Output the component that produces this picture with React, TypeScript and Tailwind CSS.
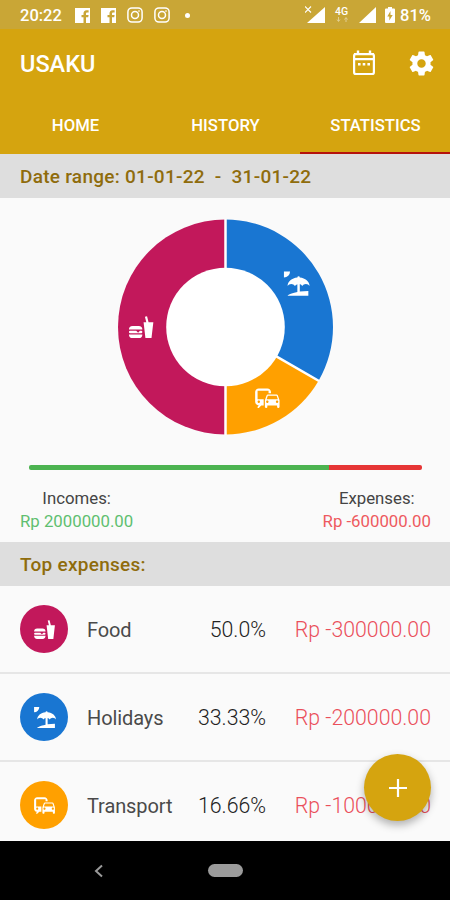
import type { ReactNode } from 'react';

const ICON_PATHS = {
  food: 'M15.5,21L14,8H16.23L15.1,3.46L16.84,3L18.09,8H22L20.5,21H15.5M5,11H10A3,3 0 0,1 13,14H2A3,3 0 0,1 5,11M13,18A3,3 0 0,1 10,21H5A3,3 0 0,1 2,18H13M3,15H8L9.5,16.5L11,15H12A1,1 0 0,1 13,16A1,1 0 0,1 12,17H3A1,1 0 0,1 2,16A1,1 0 0,1 3,15Z',
  beach:
    'M15,18.54C17.13,18.21 19.5,18 22,18V22H5C5,21.35 8.2,19.86 13,18.9V12.4C12.16,12.65 11.45,13.21 11,13.95C10.39,12.93 9.27,12.25 8,12.25C6.73,12.25 5.61,12.93 5,13.95C5.03,10.37 8.5,7.43 13,7.04V7A1,1 0 0,1 14,6A1,1 0 0,1 15,7V7.04C19.5,7.43 22.96,10.37 23,13.95C22.39,12.93 21.27,12.25 20,12.25C18.73,12.25 17.61,12.93 17,13.95C16.55,13.21 15.84,12.65 15,12.39V18.54M7,2A5,5 0 0,1 2,7V2H7Z',
  commute:
    'M12 4H5C3.34 4 2 5.34 2 7v8c0 1.66 1.34 3 3 3l-1 1v1h1l2-2.03L9 18v-5H4V5.98L13 6v2h2V7c0-1.66-1.34-3-3-3zM5 14c.55 0 1 .45 1 1s-.45 1-1 1-1-.45-1-1 .45-1 1-1zm15.57-4.34c-.14-.4-.52-.66-.97-.66h-7.19c-.46 0-.83.26-.98.66L10 13.77l.01 5.51c0 .38.31.72.69.72h.62c.38 0 .68-.38.68-.76V18h8v1.24c0 .38.31.76.69.76h.61c.38 0 .69-.34.69-.72l.01-1.37v-4.14l-1.43-4.11zm-8.16.34h7.19l1.03 3h-9.25l1.03-3zM12 16c-.55 0-1-.45-1-1s.45-1 1-1 1 .45 1 1-.45 1-1 1zm8 0c-.55 0-1-.45-1-1s.45-1 1-1 1 .45 1 1-.45 1-1 1z',
};

type IconName = keyof typeof ICON_PATHS;

interface Expense {
  name: string;
  percent: string;
  amount: string;
  icon: IconName;
  color: string;
}

const expenses: Expense[] = [
  { name: 'Food', percent: '50.0%', amount: 'Rp -300000.00', icon: 'food', color: 'bg-[#c2185b]' },
  { name: 'Holidays', percent: '33.33%', amount: 'Rp -200000.00', icon: 'beach', color: 'bg-[#1976d2]' },
  { name: 'Transport', percent: '16.66%', amount: 'Rp -100000.00', icon: 'commute', color: 'bg-[#ffa000]' },
];

const tabs = ['HOME', 'HISTORY', 'STATISTICS'];

function FacebookIcon() {
  return (
    <svg className="w-[15px] h-[15px]" viewBox="0 0 15 15">
      <path
        fill="currentColor"
        d="M0 0h15v15h-4V9.3h2.2l.4-2.3H11V5.6c0-.8.4-1.2 1.3-1.2h1.3V2.3h-2C9.5 2.3 8.5 3.6 8.5 5.5V7H6.5v2.3h2V15H0z"
      />
    </svg>
  );
}

function InstagramIcon() {
  return (
    <svg className="w-4 h-4" viewBox="0 0 16 16" fill="none" stroke="currentColor" strokeWidth="1.5">
      <rect x="0.9" y="0.9" width="14.2" height="14.2" rx="4" />
      <circle cx="8" cy="8" r="3.5" />
      <circle cx="12" cy="4" r="0.5" fill="currentColor" strokeWidth="0.6" />
    </svg>
  );
}

function SignalIcon() {
  return (
    <svg className="w-[17px] h-4" viewBox="0 0 17 16">
      <path d="M17 0v16H0z" fill="currentColor" />
    </svg>
  );
}

function StatusBar() {
  return (
    <div className="flex h-[29px] items-center bg-[#c9a636] pt-[1px] pl-5 text-white">
      <span className="w-[55px] pt-[2px] text-[16.5px] leading-none font-medium">20:22</span>
      <div className="flex items-center gap-[11px]">
        <FacebookIcon />
        <FacebookIcon />
        <InstagramIcon />
        <InstagramIcon />
      </div>
      <div className="ml-[15px] h-[5px] w-[5px] rounded-full bg-white" />
      <div className="ml-[115px] flex items-center">
        <svg className="h-[18px] w-5" viewBox="0 0 20 18">
          <path d="M20 1v16H2z" fill="currentColor" />
          <path d="M0 .5l6 6M6 .5l-6 6" stroke="currentColor" strokeWidth="1.1" />
        </svg>
        <div className="ml-[9px] flex h-[17px] w-[15px] flex-col items-center">
          <span className="text-[10.5px] leading-[10px] font-medium">4G</span>
          <svg className="h-[5px] w-3 opacity-45" viewBox="0 0 12 5" stroke="currentColor" fill="none">
            <path d="M2.5 0v4M1 2.5l1.5 2L4 2.5M10 5V1M8.5 2.5L10 .5l1.5 2" />
          </svg>
        </div>
        <div className="ml-[10px]">
          <SignalIcon />
        </div>
        <svg className="ml-[9px] h-4 w-[10px]" viewBox="0 0 10 16">
          <path
            fill="currentColor"
            fillRule="evenodd"
            d="M3 0h4v1.5h2a1 1 0 0 1 1 1V15a1 1 0 0 1-1 1H1a1 1 0 0 1-1-1V2.5a1 1 0 0 1 1-1h2zM5.5 4L2.3 9.5h2V13.5L7.7 8H5.5z"
          />
        </svg>
        <span className="ml-[5px] pt-[2px] text-[16.5px] leading-none font-medium">81%</span>
      </div>
    </div>
  );
}

function AppBar() {
  return (
    <header className="bg-[#d5a40f] text-white">
      <div className="flex h-[68px] items-center pl-5 pr-[14px]">
        <h1 className="flex-1 pt-[3px] text-[23.5px] leading-none font-medium">USAKU</h1>
        <svg className="h-[26px] w-[22px]" viewBox="0 0 22 26" fill="none" stroke="currentColor">
          <rect x="1.1" y="4" width="19.8" height="20" rx="1.8" strokeWidth="2.2" />
          <path d="M1 4.2h20M1 9.2h20" strokeWidth="2.2" />
          <path d="M5 4V.5M17 4V.5" strokeWidth="2.4" />
          <path d="M5 14.2h2.6M9.7 14.2h2.6M14.4 14.2H17" strokeWidth="2.6" />
        </svg>
        <svg className="ml-8 h-[29px] w-[29px]" viewBox="0 0 24 24" fill="currentColor">
          <path d="M19.43 12.98c.04-.32.07-.64.07-.98s-.03-.66-.07-.98l2.11-1.65c.19-.15.24-.42.12-.64l-2-3.46c-.12-.22-.39-.3-.61-.22l-2.49 1c-.52-.4-1.08-.73-1.69-.98l-.38-2.65C14.46 2.18 14.25 2 14 2h-4c-.25 0-.46.18-.49.42l-.38 2.65c-.61.25-1.17.59-1.69.98l-2.49-1c-.23-.09-.49 0-.61.22l-2 3.46c-.13.22-.07.49.12.64l2.11 1.65c-.04.32-.07.65-.07.98s.03.66.07.98l-2.11 1.65c-.19.15-.24.42-.12.64l2 3.46c.12.22.39.3.61.22l2.49-1c.52.4 1.08.73 1.69.98l.38 2.65c.03.24.24.42.49.42h4c.25 0 .46-.18.49-.42l.38-2.65c.61-.25 1.17-.59 1.69-.98l2.49 1c.23.09.49 0 .61-.22l2-3.46c.12-.22.07-.49-.12-.64l-2.11-1.65zM12 15.5c-1.93 0-3.5-1.57-3.5-3.5s1.57-3.5 3.5-3.5 3.5 1.57 3.5 3.5-1.57 3.5-3.5 3.5z" />
        </svg>
      </div>
      <nav className="grid h-[57px] grid-cols-3">
        {tabs.map((tab) => (
          <div
            key={tab}
            className={`flex items-center justify-center border-b-[2px] pt-[3px] pl-px text-[16.7px] leading-none font-medium ${
              tab === 'STATISTICS' ? 'border-[#b5120b]' : 'border-transparent'
            }`}
          >
            {tab}
          </div>
        ))}
      </nav>
    </header>
  );
}

function SectionTitle({ children }: { children: ReactNode }) {
  return (
    <div className="flex h-[44px] shrink-0 items-center bg-[#dedede] pl-5 text-[19px] leading-none font-medium tracking-[0.27px] whitespace-pre text-[#8f6c0c]">
      {children}
    </div>
  );
}

function DonutChart() {
  return (
    <svg className="mx-auto block h-[220px] w-[220px]" viewBox="-110.5 -110 220 220">
      <path d="M0 107.5A107.5 107.5 0 0 1 0-107.5V0z" fill="#c2185b" />
      <path d="M0-107.5A107.5 107.5 0 0 1 93.1 53.75L0 0z" fill="#1976d2" />
      <path d="M93.1 53.75A107.5 107.5 0 0 1 0 107.5V0z" fill="#ffa000" />
      <path d="M0-108V108M0 0L93.5 54" stroke="#fff" strokeWidth="2.5" />
      <circle r="59.3" fill="#fff" />
      <g fill="#fff">
        <path d={ICON_PATHS.food} transform="translate(-99 -14.5) scale(1.22)" />
        <path d={ICON_PATHS.beach} transform="translate(56 -58) scale(1.22)" />
        <path d={ICON_PATHS.commute} transform="translate(27.2 56.5) scale(1.22)" />
      </g>
    </svg>
  );
}

function Totals() {
  return (
    <div className="flex justify-between pr-[19px] pl-5 text-center text-[16.8px] leading-[23px] text-[#444]">
      <div>
        <p>Incomes:</p>
        <p className="text-[#5fbf70]">Rp 2000000.00</p>
      </div>
      <div>
        <p>Expenses:</p>
        <p className="text-[#ee5a5f]">Rp -600000.00</p>
      </div>
    </div>
  );
}

function ExpenseRow({ expense }: { expense: Expense }) {
  return (
    <div className="flex h-[88px] shrink-0 items-center border-b-2 border-[#e6e6e6] pr-[19px] pl-5 text-[21.3px] leading-none font-light text-[#222]">
      <div className={`flex h-12 w-12 items-center justify-center rounded-full ${expense.color}`}>
        <svg className="h-[25px] w-[25px]" viewBox="0 0 24 24" fill="#fff">
          <path d={ICON_PATHS[expense.icon]} />
        </svg>
      </div>
      <span className="ml-[19px] flex-1 pt-[2px] text-[20px] font-normal tracking-[-0.1px] text-[#4a4a4a]">
        {expense.name}
      </span>
      <span className="pt-[2px]">{expense.percent}</span>
      <span className="w-[165px] pt-[2px] text-right text-[#ea4f5a]">{expense.amount}</span>
    </div>
  );
}

export default function App() {
  return (
    <div className="relative flex h-[900px] w-[450px] flex-col overflow-hidden bg-[#fafafa] font-[Roboto,sans-serif]">
      <StatusBar />
      <AppBar />
      <SectionTitle>{'Date range: 01-01-22  -  31-01-22'}</SectionTitle>

      <div className="h-[344px] shrink-0 pt-[19px]">
        <DonutChart />
        <div className="mr-7 ml-[29px] mt-[28px] flex h-[5px] overflow-hidden rounded-[2px]">
          <div className="w-[300px] bg-[#4cb350]" />
          <div className="flex-1 bg-[#e63535]" />
        </div>
        <div className="mt-[17px]">
          <Totals />
        </div>
      </div>

      <SectionTitle>Top expenses:</SectionTitle>
      <div className="flex h-[255px] shrink-0 flex-col overflow-hidden">
        {expenses.map((expense) => (
          <ExpenseRow key={expense.name} expense={expense} />
        ))}
      </div>

      <div className="flex flex-1 items-center bg-black">
        <svg className="ml-[94px] h-[14px] w-[9px]" viewBox="0 0 9 14" fill="none" stroke="#9a9a9a" strokeWidth="2">
          <path d="M8 1.5L2 7l6 5.5" />
        </svg>
        <div className="ml-[105px] h-[13px] w-[35px] rounded-full bg-[#9b9b9b]" />
      </div>

      {/* Add button floating over the list */}
      <button className="absolute right-[19px] bottom-[79px] flex h-[67px] w-[67px] items-center justify-center rounded-full bg-[#d5a40f] shadow-[0_4px_8px_rgba(0,0,0,0.3)]">
        <svg className="h-[18px] w-[18px]" viewBox="0 0 18 18" stroke="#fff" strokeWidth="2.2">
          <path d="M9 0v18M0 9h18" />
        </svg>
      </button>
    </div>
  );
}
